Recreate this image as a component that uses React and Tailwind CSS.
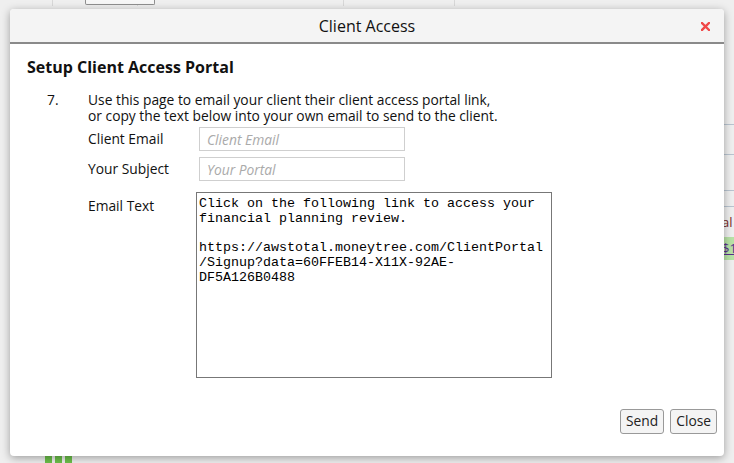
import React from 'react';

const ui = { fontFamily: '"Open Sans", "DejaVu Sans", sans-serif' };
const mono = { fontFamily: '"Liberation Mono", "Courier New", monospace' };

const emailText = `Click on the following link to access your
financial planning review.

https://awstotal.moneytree.com/ClientPortal
/Signup?data=60FFEB14-X11X-92AE-
DF5A126B0488`;

const CloseX = () => (
  <svg width="9" height="9" viewBox="0 0 9 9" className="block">
    <path d="M1 1 L8 8 M8 1 L1 8" stroke="#f04848" strokeWidth="2.4" strokeLinecap="square" />
  </svg>
);

export default function App() {
  return (
    <div className="relative w-[734px] h-[463px] overflow-hidden bg-[#e9e9e9]" style={ui}>
      {/* page behind the overlay */}
      <div className="absolute inset-0 bg-[#efefef]">
        <div className="flex h-[6px]">
          <div className="w-[53px] border-r border-[#d8d8d8]" />
          <div className="w-[85px] pl-[32px] border-r border-[#d8d8d8]">
            <div className="w-[70px] h-[5px] border border-t-0 border-[#8f8f8f] rounded-b-[2px] bg-[#f7f7f7]" />
          </div>
          <div className="w-[206px] border-r border-[#d8d8d8]" />
          <div className="w-[111px] border-r border-[#d8d8d8]" />
        </div>
        <div className="absolute right-0 top-[124px] w-[12px] flex flex-col">
          <div className="h-[30px] border-t border-[#b9c4d0]" />
          <div className="h-[36px] border-t border-[#b9c4d0]" />
          <div className="h-[16px] border-t border-[#b9c4d0]" />
          <div className="h-[31px] border-t border-[#b9c4d0] text-[13px] text-[#7a2a2a] leading-[30px]">al</div>
          <div className="h-[23px] bg-[#b8e2a6] text-[13px] text-[#5a2f8e] underline leading-[22px]">$1</div>
        </div>
        <div className="absolute left-[45px] bottom-0 flex gap-[3px]">
          <div className="w-[7px] h-[8px] bg-[#6cc04a]" />
          <div className="w-[7px] h-[8px] bg-[#6cc04a]" />
          <div className="w-[7px] h-[8px] bg-[#6cc04a]" />
        </div>
      </div>

      {/* dialog */}
      <div className="absolute left-[10px] top-[9px] w-[714px] h-[447px] bg-white rounded-[4px] shadow-[0_2px_8px_rgba(0,0,0,0.35)] flex flex-col overflow-hidden">
        <div className="relative h-[35px] bg-[#f4f4f4] border-b-2 border-[#8a8a8a] flex items-center justify-center">
          <span className="text-[16px] text-[#111]">Client Access</span>
          <span className="absolute right-[14px] top-[13px]">
            <CloseX />
          </span>
        </div>

        <div className="flex-1 flex flex-col px-[17px] pt-[12px] text-[13.8px] text-[#111]">
          <h2 className="text-[16px] font-bold leading-[22px]">Setup Client Access Portal</h2>

          <div className="flex mt-[14px] pl-[20px]">
            <div className="w-[41px] leading-[16px]">7.</div>
            <div className="flex flex-col">
              <p className="leading-[16px]">
                Use this page to email your client their client access portal link,
                <br />
                or copy the text below into your own email to send to the client.
              </p>

              <div className="flex items-center mt-[3px]">
                <label className="w-[111px]">Client Email</label>
                <input
                  className="w-[206px] h-[24px] px-[7px] border border-[#cfcfcf] text-[13.8px] italic placeholder:text-[#aaa] outline-none"
                  placeholder="Client Email"
                />
              </div>
              <div className="flex items-center mt-[6px]">
                <label className="w-[111px]">Your Subject</label>
                <input
                  className="w-[206px] h-[24px] px-[7px] border border-[#cfcfcf] text-[13.8px] italic placeholder:text-[#aaa] outline-none"
                  placeholder="Your Portal"
                />
              </div>
              <div className="flex items-start mt-[11px]">
                <label className="w-[108px] pt-[4px]">Email Text</label>
                <textarea
                  className="w-[356px] h-[186px] px-[2px] pt-[4px] border border-[#777] text-[13.33px] leading-[14.8px] resize-none outline-none text-black"
                  style={mono}
                  defaultValue={emailText}
                />
              </div>
            </div>
          </div>

          <div className="flex justify-end gap-[6px] mt-auto mb-[22px] mr-[-10px]">
            <button className="h-[25px] px-[5px] border border-[#999] rounded-[3px] bg-[#f4f4f4] text-[13.8px] text-[#222]">Send</button>
            <button className="h-[25px] px-[5px] border border-[#999] rounded-[3px] bg-[#f4f4f4] text-[13.8px] text-[#222]">Close</button>
          </div>
        </div>
      </div>
    </div>
  );
}
